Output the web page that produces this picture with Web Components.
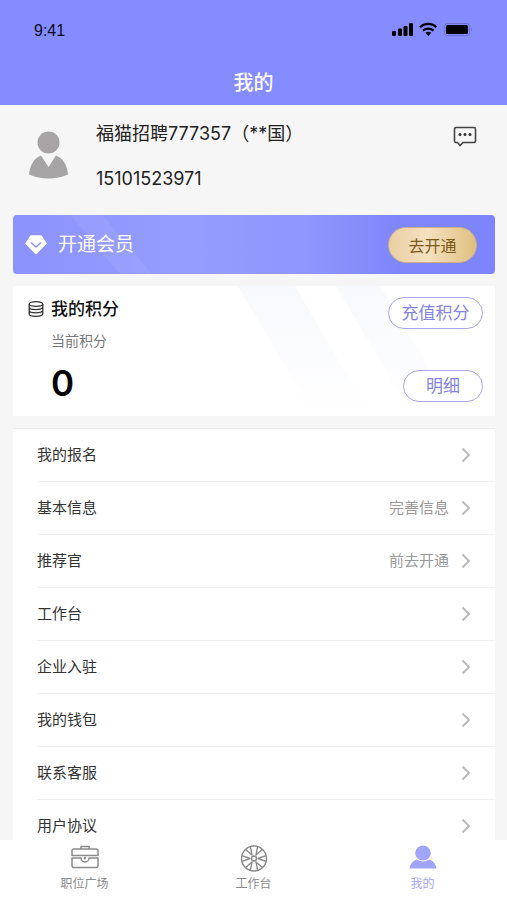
<!DOCTYPE html>
<html lang="zh-CN">
<head>
<meta charset="utf-8">
<meta name="viewport" content="width=device-width, initial-scale=1">
<title>我的</title>
<style>
  html, body {
    height: 100%;
    margin: 0;
  }
  body {
    font-family: Inter, "Noto Sans CJK SC", sans-serif;
    font-size: 16px;
    color: #333;
    background: #f6f6f6;
  }
</style>
</head>
<body>
<mine-page></mine-page>

<script>
class StatusBar extends HTMLElement {

  constructor() {
    super()
    const root = this.attachShadow({mode: 'open'})
    root.innerHTML = `
      <style>
        :host {
          display: flex;
          align-items: center;
          justify-content: space-between;
          height: 62px;
          padding: 0 34px;
          font: 16px/20px "Liberation Sans", sans-serif;
          color: #0b0b22;
        }
        svg {
          display: block;
        }
      </style>
      <span>9:41</span>
      <svg width="81" height="18" viewBox="0 0 81 18" aria-hidden="true">
        <g fill="#000">
          <rect x="0" y="9" width="4" height="5" rx="1.200"/>
          <rect x="6" y="6.500" width="4" height="7.500" rx="1.200"/>
          <rect x="11.500" y="4" width="4" height="10" rx="1.200"/>
          <rect x="17" y="1" width="4" height="13" rx="1.200"/>
        </g>
        <g fill="none" stroke="#000" stroke-width="2.200">
          <path d="M28 5.200a12 12 0 0 1 16.500 0"/>
          <path d="M31 8.600a8 8 0 0 1 10.500 0"/>
        </g>
        <path d="M33.300 10.800a5 5 0 0 1 6 0l-3 3.100z"/>
        <rect x="52.500" y="1.500" width="25" height="12" rx="3" fill="none" stroke="#6c70c8"/>
        <rect x="54" y="3" width="22" height="9" rx="1.500"/>
        <path d="M79 5.500q2 2 0 4z" fill="#6c70c8"/>
      </svg>
    `
  }

}

class PageHeader extends HTMLElement {

  constructor() {
    super()
    const root = this.attachShadow({mode: 'open'})
    root.innerHTML = `
      <style>
        :host {
          display: block;
          flex: none;
          background: #858cff;
        }
        h1 {
          margin: 0;
          padding: 7px 0 8px;
          font-size: 20px;
          line-height: 28px;
          font-weight: 500;
          text-align: center;
          color: #fff;
        }
      </style>
      <status-bar></status-bar>
      <h1><slot></slot></h1>
    `
  }

}

class UserProfile extends HTMLElement {

  constructor() {
    super()
    const root = this.attachShadow({mode: 'open'})
    root.innerHTML = `
      <style>
        :host {
          display: flex;
          align-items: flex-start;
          height: 89px;
          padding: 16px 18px 5px 16px;
          color: #222;
        }
        .avatar {
          flex: none;
          margin: 10px 28px 0 0;
        }
        .info {
          flex: 1;
          font-size: 18px;
          line-height: 25px;
        }
        p {
          margin: 0 0 20px;
        }
        button {
          margin: 5px 0 0;
          padding: 0;
          border: 0;
          background: none;
          cursor: pointer;
        }
        svg {
          display: block;
        }
      </style>
      <svg class="avatar" width="39" height="48" viewBox="0 0 39 48" fill="#a6a4a5" aria-hidden="true">
        <circle cx="19.500" cy="11.500" r="11"/>
        <path d="M12 24.500L19.500 36 27 24.500C34 27 38 34 39 43.500Q30 47.500 19.500 47.500T0 43.500C1 34 5 27 12 24.500z"/>
      </svg>
      <div class="info">
        <p><slot name="name"></slot></p>
        <p><slot name="phone"></slot></p>
      </div>
      <button type="button" aria-label="消息">
        <svg width="24" height="22" viewBox="0 0 24 22">
          <path d="M3 1.500h18a1.500 1.500 0 0 1 1.500 1.500v12a1.500 1.500 0 0 1-1.500 1.500H10L7 19.500 4.500 16.500H3A1.500 1.500 0 0 1 1.500 15V3A1.500 1.500 0 0 1 3 1.500z" fill="none" stroke="#444" stroke-width="1.600"/>
          <g fill="#333">
            <circle cx="7" cy="8.500" r="1.500"/>
            <circle cx="12" cy="8.500" r="1.500"/>
            <circle cx="17" cy="8.500" r="1.500"/>
          </g>
        </svg>
      </button>
    `
  }

}

class VipBanner extends HTMLElement {

  constructor() {
    super()
    const root = this.attachShadow({mode: 'open'})
    root.innerHTML = `
      <style>
        :host {
          display: flex;
          align-items: center;
          height: 59px;
          padding: 0 18px 0 12px;
          border-radius: 4px;
          color: #fff;
          background:
            linear-gradient(50deg, transparent 42%, #ffffff0e 42%, #ffffff0e 62%, transparent 62%) 40px 0 / 110px 100% no-repeat,
            linear-gradient(90deg, #8c92fc, #959dff 35%, #8f97fd 60%, #7f86fa 80%, #7e84fb);
        }
        svg {
          margin-right: 11px;
        }
        .title {
          flex: 1;
          font-size: 19px;
          line-height: 28px;
        }
        button {
          width: 89px;
          height: 36px;
          padding: 0;
          border: 1px solid #cdb184;
          border-radius: 18px;
          font: inherit;
          font-size: 16px;
          color: #7b5a1c;
          background: linear-gradient(90deg, #e9cfa4, #f5e0bf 45%, #dfc07f);
          cursor: pointer;
        }
      </style>
      <svg width="22" height="20" viewBox="0 0 22 20" aria-hidden="true">
        <path d="M6 1h10l5 7.500L11 18.500 1 8.500z" fill="#fff" stroke="#fff" stroke-width="1.500" stroke-linejoin="round"/>
        <path d="M6.500 8L11 12l4.500-4" fill="none" stroke="#8c92fc" stroke-width="1.600" stroke-linecap="round" stroke-linejoin="round"/>
      </svg>
      <span class="title"><slot></slot></span>
      <button type="button">去开通</button>
    `
  }

}

class PointsCard extends HTMLElement {

  constructor() {
    super()
    const root = this.attachShadow({mode: 'open'})
    root.innerHTML = `
      <style>
        :host {
          display: flex;
          justify-content: space-between;
          box-sizing: border-box;
          height: 130px;
          padding: 11px 12px 14px 15px;
          background: #fff;
        }
        .points {
          display: grid;
          grid-template-columns: 16px auto;
          column-gap: 7px;
          align-content: start;
          align-items: center;
        }
        h2 {
          margin: 0;
          font-size: 17px;
          line-height: 24px;
          font-weight: 500;
          color: #111;
        }
        .label, .value {
          grid-column: 2;
        }
        .label {
          margin-top: 9px;
          font-size: 14px;
          line-height: 22px;
          color: #777;
        }
        .value {
          margin-top: 9px;
          font-size: 35px;
          line-height: 44px;
          font-weight: 600;
          color: #000;
        }
        .rays {
          flex: 1;
          height: 130px;
          max-width: 210px;
          margin: -11px 0 0 auto;
        }
        .actions {
          display: flex;
          flex-direction: column;
          align-items: flex-end;
          justify-content: space-between;
          margin-left: -40px;
        }
        button {
          width: 95px;
          height: 32px;
          padding: 0;
          border: 1px solid #aaa6ec;
          border-radius: 16px;
          font: inherit;
          font-size: 17px;
          line-height: 28px;
          color: #8584dc;
          background: #fff;
          cursor: pointer;
        }
        button.small {
          width: 80px;
        }
      </style>
      <div class="points">
        <svg width="16" height="16" viewBox="0 0 16 16" fill="none" stroke="#333" stroke-width="1.300" aria-hidden="true">
          <ellipse cx="8" cy="3" rx="6.800" ry="2.300"/>
          <path d="M1.200 3v10c0 1.300 2.800 2.300 6.800 2.300s6.800-1 6.800-2.300V3M1.200 6.300c0 1.300 2.800 2.300 6.800 2.300s6.800-1 6.800-2.300M1.200 9.600c0 1.300 2.800 2.300 6.800 2.300s6.800-1 6.800-2.300"/>
        </svg>
        <h2>我的积分</h2>
        <span class="label">当前积分</span>
        <span class="value"><slot></slot></span>
      </div>
      <svg class="rays" viewBox="0 0 210 130" preserveAspectRatio="none" aria-hidden="true">
        <defs>
          <linearGradient id="fade" x1="0" y1="0" x2="0" y2="1">
            <stop offset="0" stop-color="#f8f9fd"/>
            <stop offset="1" stop-color="#fff"/>
          </linearGradient>
        </defs>
        <path d="M20 0h57l76 130H96z" fill="url(#fade)"/>
        <path d="M118 0h44l48 81v49h-16z" fill="url(#fade)"/>
      </svg>
      <div class="actions">
        <button type="button">充值积分</button>
        <button type="button" class="small">明细</button>
      </div>
    `
  }

}

class MenuRow extends HTMLElement {

  constructor() {
    super()
    const root = this.attachShadow({mode: 'open'})
    root.innerHTML = `
      <style>
        :host {
          display: block;
          padding-left: 24px;
          background: #fff;
        }
        a {
          display: flex;
          align-items: center;
          gap: 12px;
          box-sizing: border-box;
          height: 53px;
          padding-right: 24px;
          border-bottom: 1px solid #f1f1f1;
          font-size: 15px;
          line-height: 24px;
          color: #333;
          text-decoration: none;
        }
        .label {
          flex: 1;
        }
        .note {
          color: #999;
        }
      </style>
      <a href="#">
        <span class="label"><slot></slot></span>
        <span class="note">${this.getAttribute("note") || ""}</span>
        <svg width="10" height="16" viewBox="0 0 10 16" fill="none" stroke="#bbb" stroke-width="2" aria-hidden="true">
          <path d="M1.500 1.500L8 8l-6.500 6.500"/>
        </svg>
      </a>
    `
  }

}

const TAB_ICONS = {
  jobs: `
    <g fill="none" stroke="currentColor" stroke-width="1.500" stroke-linejoin="round">
      <path d="M10 5V2.500h8V5M3 5h22a2 2 0 0 1 2 2v4.500H1V7a2 2 0 0 1 2-2z"/>
      <path d="M1 14h9a4 4 0 0 0 8 0h9v7.500a2 2 0 0 1-2 2H3a2 2 0 0 1-2-2z"/>
    </g>
    <circle cx="14" cy="14" r="1.300" fill="currentColor"/>`,
  desk: `
    <g fill="none" stroke="currentColor" stroke-width="1.400" stroke-linejoin="round">
      <circle cx="14" cy="14.500" r="12.500"/>
      <circle cx="14" cy="14.500" r="2.500"/>
      ${[30, 90, 150, 210, 270, 330].map(a => `
        <path transform="rotate(${a} 14 14.500)" d="M11.200 2.500L14 10.500l2.800-8"/>`).join("")}
    </g>`,
  mine: `
    <g fill="currentColor">
      <ellipse cx="14" cy="9" rx="7.800" ry="7.500"/>
      <path d="M.500 24.500C1 20 4 16.500 8 15.500q6 4 12 0c4 1 7 4.500 7.500 9z"/>
    </g>`
}

class TabItem extends HTMLElement {

  constructor() {
    super()
    const root = this.attachShadow({mode: 'open'})
    root.innerHTML = `
      <style>
        :host {
          flex: 1;
          color: #8a8a8a;
        }
        :host([active]) {
          color: #a0a5fa;
        }
        a {
          display: flex;
          flex-direction: column;
          align-items: center;
          gap: 3px;
          padding-top: 4px;
          font-size: 12px;
          line-height: 18px;
          color: inherit;
          text-decoration: none;
        }
      </style>
      <a href="#">
        <svg width="28" height="28" viewBox="0 0 28 28" aria-hidden="true">${TAB_ICONS[this.getAttribute("icon")]}</svg>
        <slot></slot>
      </a>
    `
  }

}

class MinePage extends HTMLElement {

  constructor() {
    super()
    const root = this.attachShadow({mode: 'open'})
    root.innerHTML = `
      <style>
        :host {
          display: flex;
          flex-direction: column;
          height: 100%;
        }
        main {
          flex: 1;
          min-height: 0;
          overflow-y: auto;
          scrollbar-width: none;
          padding: 0 12px 0 13px;
        }
        points-card, .menu {
          margin-top: 12px;
        }
        .menu {
          border-top: 1px solid #ececec;
        }
        nav {
          display: flex;
          flex: none;
          height: 60px;
          background: #fff;
        }
      </style>
      <page-header>我的</page-header>
      <main>
        <user-profile>
          <span slot="name">福猫招聘777357（**国）</span>
          <span slot="phone">15101523971</span>
        </user-profile>
        <vip-banner>开通会员</vip-banner>
        <points-card>0</points-card>
        <div class="menu">
          <menu-row>我的报名</menu-row>
          <menu-row note="完善信息">基本信息</menu-row>
          <menu-row note="前去开通">推荐官</menu-row>
          <menu-row>工作台</menu-row>
          <menu-row>企业入驻</menu-row>
          <menu-row>我的钱包</menu-row>
          <menu-row>联系客服</menu-row>
          <menu-row>用户协议</menu-row>
        </div>
      </main>
      <nav>
        <tab-item icon="jobs">职位广场</tab-item>
        <tab-item icon="desk">工作台</tab-item>
        <tab-item icon="mine" active>我的</tab-item>
      </nav>
    `
  }

}

customElements.define("status-bar", StatusBar)
customElements.define("page-header", PageHeader)
customElements.define("user-profile", UserProfile)
customElements.define("vip-banner", VipBanner)
customElements.define("points-card", PointsCard)
customElements.define("menu-row", MenuRow)
customElements.define("tab-item", TabItem)
customElements.define("mine-page", MinePage)
</script>
</body>
</html>
